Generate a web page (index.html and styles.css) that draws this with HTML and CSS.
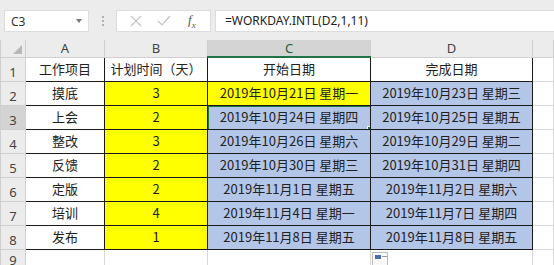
FILE: index.html
```html
<!DOCTYPE html>
<html lang="zh-CN">
<head>
    <meta charset="UTF-8">
    <title>工作计划</title>
    <link rel="stylesheet" href="styles.css">
</head>
<body>
    <!-- 名称框和编辑栏 -->
    <div class="toolbar">
        <div class="namebox">
            <span>C3</span>
            <span class="drop"></span>
        </div>
        <div class="grip"></div>
        <div class="fxbox">
            <svg width="12" height="12" viewBox="0 0 12 12"><path d="M1 1 L11 11 M11 1 L1 11" stroke="#c4c4c4" stroke-width="1.2" fill="none"/></svg>
            <svg width="14" height="12" viewBox="0 0 14 12"><path d="M1 6 L5 10 L13 1" stroke="#c4c4c4" stroke-width="1.2" fill="none"/></svg>
            <span class="fx">f<sub>x</sub></span>
        </div>
        <div class="formula">=WORKDAY.INTL(D2,1,11)</div>
    </div>

    <!-- 表格 -->
    <table class="sheet">
        <colgroup>
            <col style="width:25px">
            <col style="width:79px">
            <col style="width:103px">
            <col style="width:163px">
            <col style="width:162px">
            <col>
        </colgroup>
        <tr class="colhead">
            <th class="corner"><span class="tri"></span></th>
            <th>A</th>
            <th>B</th>
            <th class="sel">C</th>
            <th>D</th>
            <th></th>
        </tr>
        <tr>
            <th>1</th>
            <td class="box">工作项目</td>
            <td class="box">计划时间（天）</td>
            <td class="box">开始日期</td>
            <td class="box">完成日期</td>
            <td></td>
        </tr>
        <tr>
            <th>2</th>
            <td class="box">摸底</td>
            <td class="box yellow">3</td>
            <td class="box yellow">2019年10月21日 星期一</td>
            <td class="box blue">2019年10月23日 星期三</td>
            <td></td>
        </tr>
        <tr>
            <th class="sel">3</th>
            <td class="box">上会</td>
            <td class="box yellow">2</td>
            <td class="box blue active">2019年10月24日 星期四</td>
            <td class="box blue">2019年10月25日 星期五</td>
            <td></td>
        </tr>
        <tr>
            <th>4</th>
            <td class="box">整改</td>
            <td class="box yellow">3</td>
            <td class="box blue">2019年10月26日 星期六</td>
            <td class="box blue">2019年10月29日 星期二</td>
            <td></td>
        </tr>
        <tr>
            <th>5</th>
            <td class="box">反馈</td>
            <td class="box yellow">2</td>
            <td class="box blue">2019年10月30日 星期三</td>
            <td class="box blue">2019年10月31日 星期四</td>
            <td></td>
        </tr>
        <tr>
            <th>6</th>
            <td class="box">定版</td>
            <td class="box yellow">2</td>
            <td class="box blue">2019年11月1日 星期五</td>
            <td class="box blue">2019年11月2日 星期六</td>
            <td></td>
        </tr>
        <tr>
            <th>7</th>
            <td class="box">培训</td>
            <td class="box yellow">4</td>
            <td class="box blue">2019年11月4日 星期一</td>
            <td class="box blue">2019年11月7日 星期四</td>
            <td></td>
        </tr>
        <tr>
            <th>8</th>
            <td class="box">发布</td>
            <td class="box yellow">1</td>
            <td class="box blue">2019年11月8日 星期五</td>
            <td class="box blue">2019年11月8日 星期五</td>
            <td></td>
        </tr>
        <tr class="last">
            <th>9</th>
            <td></td>
            <td></td>
            <td></td>
            <td><span class="paste"></span></td>
            <td></td>
        </tr>
    </table>
</body>
</html>
```

FILE: styles.css
```css
/* 页面 */
body {
    margin: 0;
    width: 554px;
    height: 265px;
    overflow: hidden;
    background: #fff;
    font-family: "Noto Sans CJK SC", sans-serif;
    color: #222;
}

/* 编辑栏 */
.toolbar {
    height: 40px;
    background: #ececec;
    display: flex;
    align-items: center;
    box-sizing: border-box;
    padding-top: 2px;
}

.namebox {
    width: 85px;
    height: 22px;
    margin-left: 4px;
    background: #fff;
    border: 1px solid #dcdcdc;
    box-sizing: border-box;
    display: flex;
    align-items: center;
    justify-content: space-between;
    padding: 0 6px 0 6px;
    font-family: "Noto Sans", sans-serif;
    font-size: 12px;
    color: #333;
}

.drop {
    width: 0;
    height: 0;
    border-left: 3px solid transparent;
    border-right: 3px solid transparent;
    border-top: 4px solid #777;
}

.grip {
    width: 2px;
    height: 12px;
    margin: 0 12px 0 13px;
    background-image: radial-gradient(circle, #b0b0b0 0.8px, transparent 1px);
    background-size: 2px 4px;
}

.fxbox {
    width: 95px;
    height: 22px;
    background: #fff;
    border: 1px solid #dcdcdc;
    box-sizing: border-box;
    display: flex;
    align-items: center;
    padding-left: 13px;
    gap: 15px;
}

.fx {
    font-family: "Liberation Serif", serif;
    font-style: italic;
    font-size: 13px;
    color: #555;
    margin-left: 2px;
}

.fx sub {
    font-size: 9px;
}

.formula {
    flex: 1;
    height: 22px;
    margin-left: 4px;
    background: #fff;
    border: 1px solid #dcdcdc;
    border-right: none;
    box-sizing: border-box;
    padding-left: 9px;
    font-family: "Noto Sans", sans-serif;
    font-size: 12px;
    line-height: 20px;
    color: #222;
}

/* 表格 */
.sheet {
    border-collapse: collapse;
    table-layout: fixed;
    width: 554px;
}

.sheet td,
.sheet th {
    height: 22px;
    padding: 0;
    border: 1px solid #d8d8d8;
    text-align: center;
    font-size: 13px;
    line-height: 16px;
    font-weight: normal;
    white-space: nowrap;
    overflow: hidden;
}

.sheet th {
    background: #ececec;
    color: #444;
    font-family: "Noto Sans", sans-serif;
    border-color: #cfcfcf;
    vertical-align: bottom;
    padding-bottom: 1px;
}

.sheet .colhead th {
    height: 16px;
    vertical-align: middle;
    padding-bottom: 0;
    font-size: 13px;
    line-height: 14px;
    border-top: none;
}

.sheet .colhead th.sel {
    background: #d4d4d4;
    border-bottom: 2px solid #217346;
    color: #2d5a3d;
}

.sheet th.sel {
    background: #d4d4d4;
}

.sheet .last th,
.sheet .last td {
    vertical-align: top;
    padding-top: 2px;
}

.corner {
    position: relative;
}

.tri {
    position: absolute;
    right: 3px;
    bottom: 3px;
    width: 0;
    height: 0;
    border-left: 9px solid transparent;
    border-bottom: 9px solid #b8b8b8;
}

/* 数据区 */
.sheet td.box {
    border: 1px solid #1a1a1a;
}

.yellow {
    background: #ffff00;
}

.blue {
    background: #b4c6e7;
}

.active {
    position: relative;
}

.active::after {
    content: "";
    position: absolute;
    left: -1px;
    top: -1px;
    right: -2px;
    bottom: -2px;
    border: 2px solid #217346;
}

.active::before {
    content: "";
    position: absolute;
    right: -4px;
    bottom: -4px;
    width: 5px;
    height: 5px;
    background: #217346;
    border: 1px solid #fff;
    z-index: 1;
}

.sheet .last td {
    position: relative;
}

.paste {
    position: absolute;
    left: 1px;
    top: 2px;
    width: 16px;
    height: 14px;
    border: 1px solid #bdbdbd;
    background: #fafafa;
    box-sizing: border-box;
    background-image: linear-gradient(#4a6fb0, #4a6fb0), linear-gradient(#9a9a9a, #9a9a9a);
    background-size: 6px 4px, 5px 1px;
    background-position: 2px 2px, 9px 3px;
    background-repeat: no-repeat;
}
```
